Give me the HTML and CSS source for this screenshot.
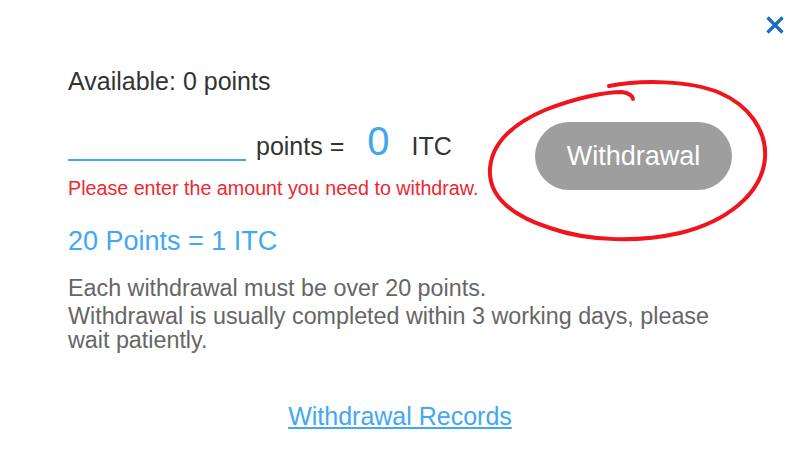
FILE: index.html
```html
<!DOCTYPE html>
<html>
<head>
<meta charset="utf-8">
<link rel="stylesheet" href="styles.css">
</head>
<body>
<div class="dialog">
  <button class="close" aria-label="Close">
    <svg width="18" height="18" viewBox="0 0 18 18"><path d="M1.5 1.5 L16.5 16.5 M16.5 1.5 L1.5 16.5" stroke="#1a6cc0" stroke-width="3.2" fill="none"/></svg>
  </button>
  <div class="available">Available: 0 points</div>
  <div class="exchange">
    <div class="left">
      <div class="convert"><span class="input"></span><span class="label">points =</span><span class="itc-value">0</span><span class="label">ITC</span></div>
      <div class="error">Please enter the amount you need to withdraw.</div>
    </div>
    <button class="withdraw">Withdrawal</button>
  </div>
  <div class="rate">20 Points = 1 ITC</div>
  <div class="notes">
    <p>Each withdrawal must be over 20 points.</p>
    <p>Withdrawal is usually completed within 3 working days, please wait patiently.</p>
  </div>
  <div class="records"><a href="#">Withdrawal Records</a></div>
  <svg class="annotation" width="800" height="457" viewBox="0 0 800 457">
    <path d="M609 86 C 640 80, 690 80, 720 93 C 748 105, 767 130, 765 158 C 762 195, 725 222, 680 233 C 640 242, 590 242, 550 228 C 510 215, 488 195, 490 168 C 492 145, 510 125, 545 110 C 575 98, 605 92, 622 92 C 630 93, 633 97, 633 99" stroke="#f0141c" stroke-width="4" fill="none" stroke-linecap="round" stroke-linejoin="round"/>
  </svg>
</div>
</body>
</html>
```
FILE: styles.css
```css
html, body {
  margin: 0;
  padding: 0;
  background: #ffffff;
}
.dialog {
  position: relative;
  width: 800px;
  height: 457px;
  box-sizing: border-box;
  padding: 66px 0 0 68px;
  font-family: "Liberation Sans", Arial, sans-serif;
  color: #333333;
  overflow: hidden;
}
.close {
  position: absolute;
  top: 16px;
  right: 16px;
  border: 0;
  background: none;
  padding: 0;
  width: 18px;
  height: 18px;
}
.close svg { display: block; }
.available {
  font-size: 25px;
  line-height: 30px;
  color: #333;
}
.exchange {
  display: flex;
  align-items: flex-start;
  margin-top: 25px;
}
.left {
  width: 440px;
}
.convert {
  font-size: 25px;
  line-height: 40px;
  white-space: nowrap;
}
.input {
  display: inline-block;
  width: 178px;
  height: 34px;
  border-bottom: 2px solid #3ea6f3;
  vertical-align: -6px;
  margin-right: 10px;
}
.label {
  color: #333;
}
.itc-value {
  font-size: 40px;
  color: #3ea6f3;
  margin: 0 22px 0 23px;
}
.error {
  font-size: 19.7px;
  line-height: 24px;
  color: #f0262f;
  margin-top: 10px;
  white-space: nowrap;
}
.withdraw {
  margin-left: 27px;
  margin-top: 1px;
  width: 197px;
  height: 68px;
  border: 0;
  border-radius: 34px;
  background: #9e9e9e;
  color: #ffffff;
  font-family: "Liberation Sans", Arial, sans-serif;
  font-size: 27px;
  padding: 0;
}
.rate {
  font-size: 27px;
  line-height: 30px;
  color: #42a7f5;
  margin-top: 26px;
}
.notes {
  margin-top: 20px;
  width: 665px;
  font-size: 23.3px;
  line-height: 24px;
  color: #666666;
}
.notes p { margin: 0 0 4px 0; }
.records {
  text-align: center;
  margin-top: 49px;
  margin-left: -68px;
  font-size: 25px;
  line-height: 30px;
}
.records a {
  color: #42a7f5;
  text-decoration: underline;
}
.annotation {
  position: absolute;
  left: 0;
  top: 0;
  pointer-events: none;
}
```
